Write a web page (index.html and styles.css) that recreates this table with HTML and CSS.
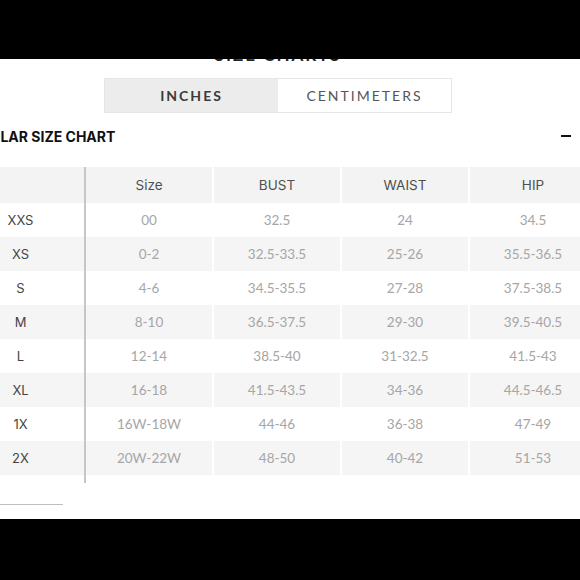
FILE: index.html
```html
<!DOCTYPE html>
<html>
<head>
<meta charset="utf-8">
<link rel="stylesheet" href="styles.css">
</head>
<body>
<div class="screen">
  <div class="content">
    <div class="page-title">SIZE CHARTS</div>
    <div class="tabs">
      <div class="tab tab-active">INCHES</div>
      <div class="tab">CENTIMETERS</div>
    </div>
    <div class="section-head">
      <div class="section-title">REGULAR SIZE CHART</div>
      <div class="minus"></div>
    </div>
    <div class="chart">
      <div class="fixed-col">
        <div class="cell head"></div>
        <div class="cell label">XXS</div>
        <div class="cell label alt">XS</div>
        <div class="cell label">S</div>
        <div class="cell label alt">M</div>
        <div class="cell label">L</div>
        <div class="cell label alt">XL</div>
        <div class="cell label">1X</div>
        <div class="cell label alt">2X</div>
      </div>
      <div class="grid">
        <div class="cell head">Size</div><div class="cell head">BUST</div><div class="cell head">WAIST</div><div class="cell head">HIP</div>
        <div class="cell val">00</div><div class="cell val">32.5</div><div class="cell val">24</div><div class="cell val">34.5</div>
        <div class="cell val alt">0-2</div><div class="cell val alt">32.5-33.5</div><div class="cell val alt">25-26</div><div class="cell val alt">35.5-36.5</div>
        <div class="cell val">4-6</div><div class="cell val">34.5-35.5</div><div class="cell val">27-28</div><div class="cell val">37.5-38.5</div>
        <div class="cell val alt">8-10</div><div class="cell val alt">36.5-37.5</div><div class="cell val alt">29-30</div><div class="cell val alt">39.5-40.5</div>
        <div class="cell val">12-14</div><div class="cell val">38.5-40</div><div class="cell val">31-32.5</div><div class="cell val">41.5-43</div>
        <div class="cell val alt">16-18</div><div class="cell val alt">41.5-43.5</div><div class="cell val alt">34-36</div><div class="cell val alt">44.5-46.5</div>
        <div class="cell val">16W-18W</div><div class="cell val">44-46</div><div class="cell val">36-38</div><div class="cell val">47-49</div>
        <div class="cell val alt">20W-22W</div><div class="cell val alt">48-50</div><div class="cell val alt">40-42</div><div class="cell val alt">51-53</div>
      </div>
    </div>
    <div class="bottom-rule"></div>
  </div>
</div>
</body>
</html>
```
FILE: styles.css
```css
html, body {
  margin: 0;
  padding: 0;
  background: #000;
}
.screen {
  margin-top: 59px;
  height: 460px;
  background: #fff;
  overflow: hidden;
}
.content {
  width: 642px;
  margin-left: -43px;
  font-family: Lato, "Liberation Sans", sans-serif;
}
.page-title {
  margin-top: -14px;
  height: 20px;
  line-height: 20px;
  text-align: center;
  font-weight: 700;
  font-size: 17px;
  letter-spacing: 2px;
  color: #222;
}
.tabs {
  display: flex;
  width: 346px;
  margin: 13px auto 0;
  border: 1px solid #e6e6e6;
}
.tab {
  flex: 1;
  height: 33px;
  line-height: 33px;
  text-align: center;
  font-size: 14px;
  letter-spacing: 2px;
  color: #555;
}
.tab-active {
  background: #ececec;
  font-weight: 700;
  color: #3a3a3a;
}
.section-head {
  display: flex;
  justify-content: space-between;
  align-items: center;
  margin-top: 13px;
  height: 20px;
  padding-left: 5px;
  padding-right: 28px;
}
.section-title {
  font-family: Inter, "Liberation Sans", sans-serif;
  font-weight: 700;
  font-size: 14px;
  color: #111;
}
.minus {
  width: 10px;
  height: 2px;
  background: #111;
}
.chart {
  display: flex;
  margin-top: 21px;
}
.fixed-col {
  width: 127px;
  border-right: 2px solid #c6c6c6;
  padding-bottom: 8px;
}
.grid {
  display: grid;
  grid-template-columns: repeat(4, 126px);
  column-gap: 2px;
  align-content: start;
}
.cell {
  height: 34px;
  display: flex;
  align-items: center;
  justify-content: center;
  font-size: 13px;
}
.cell.head {
  height: 36px;
  background: #f3f3f3;
  font-family: Inter, "Liberation Sans", sans-serif;
  font-size: 13.5px;
  color: #4f4f4f;
}
.label {
  font-family: Inter, "Liberation Sans", sans-serif;
  color: #444;
}
.val {
  color: #a6a6a6;
  font-size: 13.5px;
}
.alt {
  background: #f5f5f5;
}
.bottom-rule {
  margin-top: 21px;
  width: 106px;
  height: 1px;
  background: #bdbdbd;
}
```
